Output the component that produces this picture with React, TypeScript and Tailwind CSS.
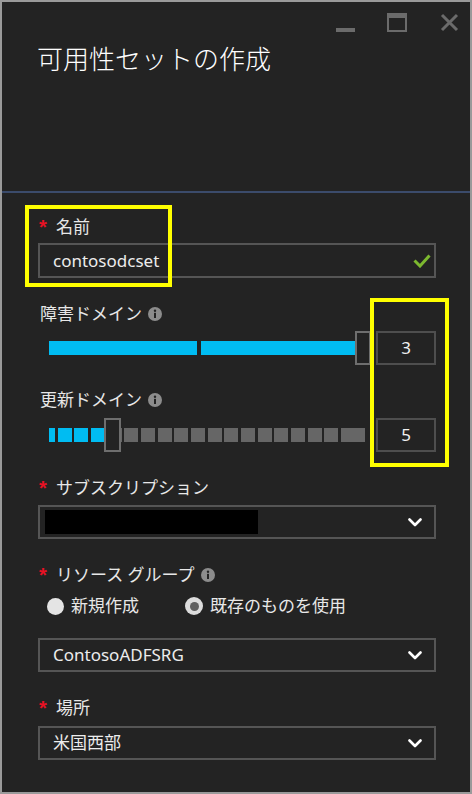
import type { ReactNode } from "react";

const font = "font-['Noto_Sans','Noto_Sans_CJK_JP',sans-serif]";

function Label({
  children,
  required,
  info,
}: {
  children: ReactNode;
  required?: boolean;
  info?: boolean;
}) {
  return (
    <div className="flex h-[24px] items-center text-[17px] leading-[24px] text-[#e8e8e8]">
      {required ? (
        <span className="w-[18px] pl-[1px] font-['Liberation_Sans',sans-serif] text-[20px] font-bold text-[#e81123]">
          *
        </span>
      ) : (
        <span className="w-[2px]" />
      )}
      <span>{children}</span>
      {info ? <InfoIcon /> : null}
    </div>
  );
}

function InfoIcon() {
  return (
    <svg width="14" height="14" viewBox="0 0 14 14" className="ml-[6px]">
      <circle cx="7" cy="7" r="7" fill="#8c8c8c" />
      <circle cx="7" cy="3.8" r="1.2" fill="#232323" />
      <rect x="6" y="5.8" width="2" height="5.2" fill="#232323" />
    </svg>
  );
}

function Chevron() {
  return (
    <svg width="14" height="9" viewBox="0 0 14 9">
      <polyline
        points="1.5,1.5 7,7 12.5,1.5"
        fill="none"
        stroke="#ffffff"
        strokeWidth="2.6"
        strokeLinecap="round"
        strokeLinejoin="round"
      />
    </svg>
  );
}

function Dropdown({ children }: { children?: ReactNode }) {
  return (
    <div className="flex h-[34px] items-center border-2 border-[#555555] pr-[12px] text-[17px] text-[#ececec]">
      <div className="flex-1">{children}</div>
      <Chevron />
    </div>
  );
}

function ValueBox({ value }: { value: string }) {
  return (
    <div className="flex h-[34px] w-[60px] items-center justify-center border-2 border-[#4e4e4e] text-[17px] text-[#f0f0f0]">
      {value}
    </div>
  );
}

function Thumb({ className }: { className: string }) {
  return (
    <div
      className={`absolute top-0 h-[34px] border-2 border-[#6e6e6e] bg-[#232323] ${className}`}
    />
  );
}

const steps = Array.from({ length: 18 }, (_, i) => i);

export default function App() {
  return (
    <div
      className={`relative h-[794px] w-[472px] overflow-hidden border-2 border-[#9a9a9a] bg-[#232323] ${font}`}
    >
      <header className="h-[189px]">
        <div className="flex items-start justify-end pr-[11px] pt-[11px]">
          <svg width="20" height="20" viewBox="0 0 20 20">
            <rect x="0" y="15" width="19" height="4" fill="#6b6b6b" />
          </svg>
          <svg width="20" height="20" viewBox="0 0 20 20" className="ml-[31px]">
            <rect x="0" y="0" width="20" height="19" fill="#6b6b6b" />
            <rect x="2" y="5" width="16" height="12" fill="#232323" />
          </svg>
          <svg width="19" height="19" viewBox="0 0 19 19" className="ml-[33px]">
            <path
              d="M2 2 L17 17 M17 2 L2 17"
              stroke="#6b6b6b"
              strokeWidth="3"
            />
          </svg>
        </div>
        <h1 className="mt-[10px] pl-[35px] text-[26px] font-light leading-[32px] text-white">
          可用性セットの作成
        </h1>
      </header>
      <div className="h-[2px] bg-[#3b4b6b]" />

      <div className="flex flex-col pl-[36px] pr-[34px] pt-[22px]">
        <Label required>名前</Label>
        <div className="mt-[4px] flex h-[35px] items-center border-2 border-[#555555] pl-[13px] pr-[3px] text-[17px] text-[#ececec]">
          <span className="flex-1">contosodcset</span>
          <svg width="18" height="14" viewBox="0 0 18 14">
            <polyline
              points="1.5,6.5 7,12 16.5,1.5"
              fill="none"
              stroke="#7cb82f"
              strokeWidth="3"
            />
          </svg>
        </div>

        <div className="mt-[24px]">
          <Label info>障害ドメイン</Label>
        </div>
        <div className="mt-[5px] flex h-[34px]">
          <div className="relative flex flex-1 items-center pl-[11px]">
            <div className="flex h-[14px] gap-[4px]">
              <div className="w-[148px] bg-[#00bcf2]" />
              <div className="w-[165px] bg-[#00bcf2]" />
            </div>
            <Thumb className="left-[317px] w-[16px]" />
          </div>
          <ValueBox value="3" />
        </div>

        <div className="mt-[23px]">
          <Label info>更新ドメイン</Label>
        </div>
        <div className="mt-[6px] flex h-[34px]">
          <div className="relative flex flex-1 items-center pl-[11px]">
            <div className="flex h-[14px] gap-[2.67px]">
              <div className="w-[6px] bg-[#00bcf2]" />
              {steps.map((i) => (
                <div
                  key={i}
                  className={`${i === 17 ? "w-[24.67px]" : "w-[14px]"} ${
                    i < 3 ? "bg-[#00bcf2]" : "bg-[#666666]"
                  }`}
                />
              ))}
            </div>
            <Thumb className="left-[66px] w-[17px]" />
          </div>
          <ValueBox value="5" />
        </div>

        <div className="mt-[24px]">
          <Label required>サブスクリプション</Label>
        </div>
        <div className="mt-[5px]">
          <Dropdown>
            <div className="ml-[5px] h-[24px] w-[213px] bg-black" />
          </Dropdown>
        </div>

        <div className="mt-[24px]">
          <Label required info>
            リソース グループ
          </Label>
        </div>
        <div className="mt-[7px] flex h-[24px] items-center text-[17px] text-[#e8e8e8]">
          <span className="ml-[9px] h-[17px] w-[17px] rounded-full bg-[#e4e4e4]" />
          <span className="ml-[7px]">新規作成</span>
          <span className="ml-[46px] flex h-[18px] w-[18px] items-center justify-center rounded-full bg-[#dcdcdc]">
            <span className="h-[9px] w-[9px] rounded-full bg-[#5f5f5f]" />
          </span>
          <span className="ml-[7px]">既存のものを使用</span>
        </div>

        <div className="mt-[20px]">
          <Dropdown>
            <span className="pl-[13px]">ContosoADFSRG</span>
          </Dropdown>
        </div>

        <div className="mt-[24px]">
          <Label required>場所</Label>
        </div>
        <div className="mt-[6px]">
          <Dropdown>
            <span className="pl-[13px]">米国西部</span>
          </Dropdown>
        </div>
      </div>

      <div className="absolute left-[23px] top-[203px] h-[82px] w-[147px] border-4 border-[#ffff00]" />
      <div className="absolute left-[368px] top-[296px] h-[169px] w-[79px] border-4 border-[#ffff00]" />
    </div>
  );
}
